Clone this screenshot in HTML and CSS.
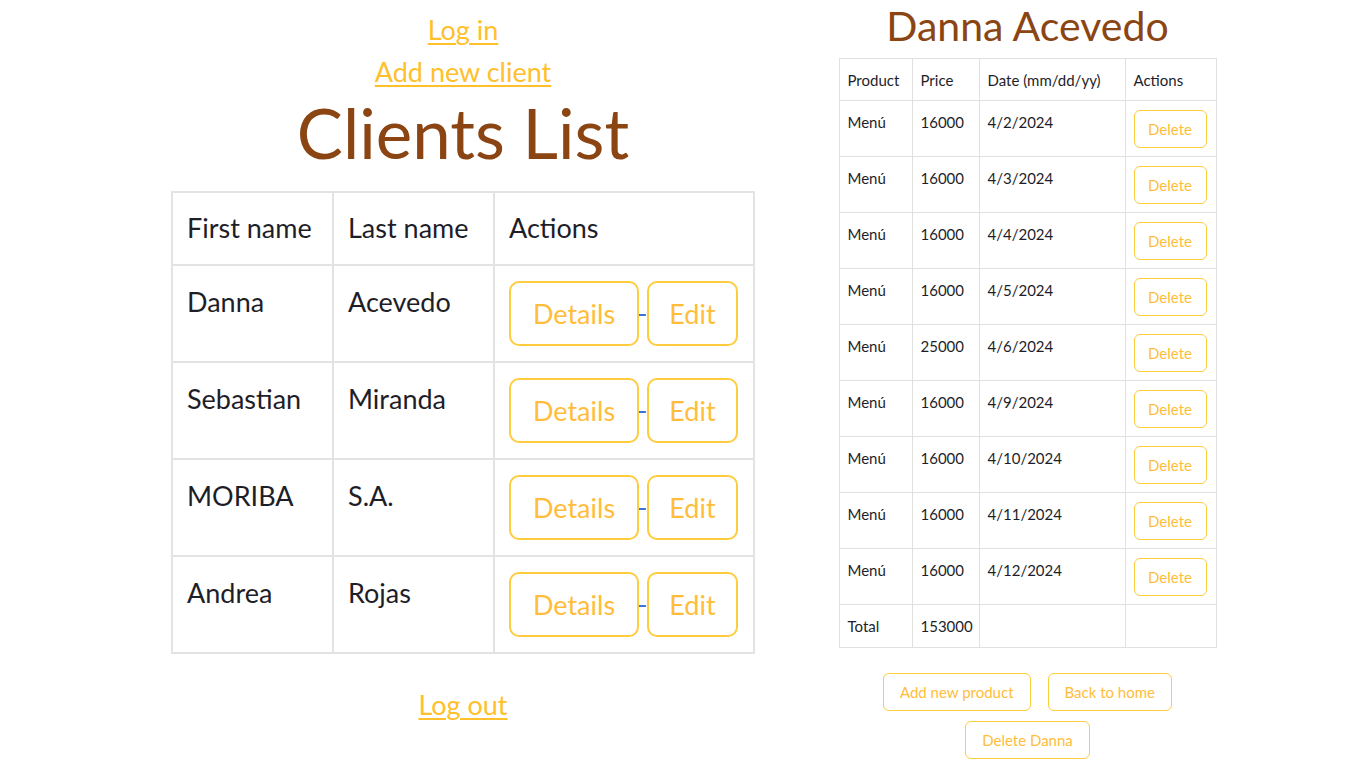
FILE: index.html
```html
<!DOCTYPE html>
<html lang="en">
<head>
<meta charset="utf-8">
<title>Clients List</title>
<link rel="stylesheet" href="styles.css">
</head>
<body>
<main class="page">
  <section class="clients">
    <a class="nav-link" href="#">Log in</a>
    <a class="nav-link" href="#">Add new client</a>
    <h1 class="title">Clients List</h1>
    <table class="clients-table">
      <colgroup><col class="c1"><col class="c2"><col class="c3"></colgroup>
      <thead>
        <tr><th>First name</th><th>Last name</th><th>Actions</th></tr>
      </thead>
      <tbody>
        <tr><td>Danna</td><td>Acevedo</td><td class="acts"><a class="blue" href="#"><button class="big-btn">Details</button> </a><button class="big-btn">Edit</button></td></tr>
        <tr><td>Sebastian</td><td>Miranda</td><td class="acts"><a class="blue" href="#"><button class="big-btn">Details</button> </a><button class="big-btn">Edit</button></td></tr>
        <tr><td>MORIBA</td><td>S.A.</td><td class="acts"><a class="blue" href="#"><button class="big-btn">Details</button> </a><button class="big-btn">Edit</button></td></tr>
        <tr><td>Andrea</td><td>Rojas</td><td class="acts"><a class="blue" href="#"><button class="big-btn">Details</button> </a><button class="big-btn">Edit</button></td></tr>
      </tbody>
    </table>
    <a class="nav-link logout" href="#">Log out</a>
  </section>

  <section class="details">
    <h2 class="name">Danna Acevedo</h2>
    <table class="products">
      <colgroup><col class="p1"><col class="p2"><col class="p3"><col class="p4"></colgroup>
      <thead>
        <tr><th>Product</th><th>Price</th><th>Date (mm/dd/yy)</th><th>Actions</th></tr>
      </thead>
      <tbody>
        <tr><td>Menú</td><td>16000</td><td>4/2/2024</td><td><button class="small-btn">Delete</button></td></tr>
        <tr><td>Menú</td><td>16000</td><td>4/3/2024</td><td><button class="small-btn">Delete</button></td></tr>
        <tr><td>Menú</td><td>16000</td><td>4/4/2024</td><td><button class="small-btn">Delete</button></td></tr>
        <tr><td>Menú</td><td>16000</td><td>4/5/2024</td><td><button class="small-btn">Delete</button></td></tr>
        <tr><td>Menú</td><td>25000</td><td>4/6/2024</td><td><button class="small-btn">Delete</button></td></tr>
        <tr><td>Menú</td><td>16000</td><td>4/9/2024</td><td><button class="small-btn">Delete</button></td></tr>
        <tr><td>Menú</td><td>16000</td><td>4/10/2024</td><td><button class="small-btn">Delete</button></td></tr>
        <tr><td>Menú</td><td>16000</td><td>4/11/2024</td><td><button class="small-btn">Delete</button></td></tr>
        <tr><td>Menú</td><td>16000</td><td>4/12/2024</td><td><button class="small-btn">Delete</button></td></tr>
        <tr class="total"><td>Total</td><td>153000</td><td></td><td></td></tr>
      </tbody>
    </table>
    <div class="bottom-actions">
      <button class="small-btn wide">Add new product</button>
      <button class="small-btn wide">Back to home</button>
      <button class="small-btn wide">Delete Danna</button>
    </div>
  </section>
</main>
</body>
</html>
```

FILE: styles.css
```css
html, body {
  margin: 0;
  padding: 0;
  background: #ffffff;
}

body {
  font-family: "Lato", "Open Sans", sans-serif;
  color: #1e1e28;
}

.page {
  display: flex;
  align-items: flex-start;
  padding-left: 172px;
  gap: 85px;
}

.clients {
  width: 582px;
  display: flex;
  flex-direction: column;
  align-items: center;
}

.nav-link {
  color: #ffc02b;
  font-size: 27px;
  line-height: 42px;
  text-decoration: underline;
  text-underline-offset: 3px;
  text-decoration-thickness: 2px;
}

.nav-link:first-child {
  margin-top: 9px;
}

.title {
  margin: 0 0 18px;
  font-size: 69px;
  line-height: 80px;
  font-weight: 400;
  color: #8b4513;
}

.clients-table {
  width: 582px;
  table-layout: fixed;
  border-collapse: collapse;
  border: 2px solid #e3e3e3;
}

.c1, .c2 { width: 161px; }
.c3 { width: 260px; }

.clients-table th,
.clients-table td {
  border: 2px solid #e3e3e3;
  padding: 15px 14px;
  text-align: left;
  vertical-align: top;
  font-size: 27px;
  font-weight: 400;
  line-height: 42px;
}

.clients-table th {
  padding-top: 14px;
  padding-bottom: 15px;
}

.clients-table td {
  padding-top: 15px;
  padding-bottom: 15px;
}

.clients-table td.acts {
  white-space: nowrap;
  font-size: 0;
}

.blue {
  color: #3a74e0;
  font-size: 27px;
  text-decoration: underline;
}

.big-btn {
  height: 65px;
  padding: 0 20px;
  font-family: inherit;
  font-size: 27px;
  color: #ffbd3a;
  background: #ffffff;
  border: 2px solid #ffcc3d;
  border-radius: 10px;
  vertical-align: top;
  cursor: pointer;
}

.acts .blue .big-btn {
  width: 130px;
}

.acts > .big-btn {
  width: 91px;
  margin-left: 1px;
}

.logout {
  margin-top: 30px;
}

.details {
  width: 377px;
  display: flex;
  flex-direction: column;
  align-items: center;
}

.name {
  margin: 2px 0 8px;
  font-size: 41px;
  line-height: 48px;
  font-weight: 400;
  color: #8b4513;
}

.products {
  width: 377px;
  table-layout: fixed;
  border-collapse: collapse;
  border: 1px solid #e0e0e0;
}

.p1 { width: 73px; }
.p2 { width: 67px; }
.p3 { width: 146px; }
.p4 { width: 91px; }

.products th,
.products td {
  border: 1px solid #e0e0e0;
  padding: 8px 8px;
  text-align: left;
  vertical-align: top;
  font-size: 15px;
  font-weight: 400;
  line-height: 26px;
}

.products thead th {
  padding: 8px 8px 7px;
}

.products tbody td {
  height: 39px;
}

.products tr.total td {
  height: 23px;
}

.small-btn {
  height: 38px;
  padding: 0 12px;
  margin-top: 1px;
  font-family: inherit;
  font-size: 15px;
  color: #ffbd3a;
  background: #ffffff;
  border: 1.5px solid #ffcc3d;
  border-radius: 6px;
  cursor: pointer;
}

.products .small-btn {
  width: 73px;
}

.bottom-actions {
  width: 320px;
  margin-top: 25px;
  display: flex;
  flex-wrap: wrap;
  justify-content: center;
  column-gap: 17px;
  row-gap: 10px;
}

.small-btn.wide {
  height: 38px;
  margin-top: 0;
  padding: 0 16px;
}
```
